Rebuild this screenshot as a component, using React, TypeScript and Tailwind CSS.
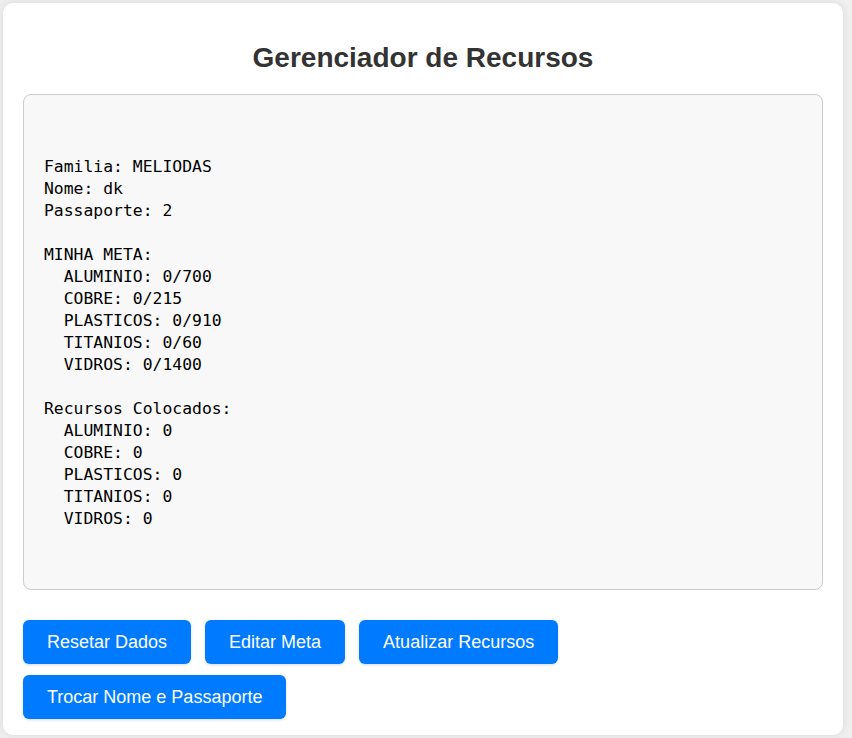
import React from "react";

const text = `

Familia: MELIODAS
Nome: dk
Passaporte: 2

MINHA META:
  ALUMINIO: 0/700
  COBRE: 0/215
  PLASTICOS: 0/910
  TITANIOS: 0/60
  VIDROS: 0/1400

Recursos Colocados:
  ALUMINIO: 0
  COBRE: 0
  PLASTICOS: 0
  TITANIOS: 0
  VIDROS: 0


`;

const buttons = ["Resetar Dados", "Editar Meta", "Atualizar Recursos", "Trocar Nome e Passaporte"];

export default function App() {
  return (
    <div className="min-h-[738px] bg-[#f0f0f0] pl-[3px] pt-[3px]" style={{ fontFamily: '"Liberation Sans", Arial, sans-serif' }}>
      <div className="w-[840px] rounded-[10px] bg-white px-5 pt-5 pb-4 shadow-[0_0_10px_rgba(0,0,0,0.1)]">
        <h2 className="mt-[19px] mb-5 text-center text-[28px] leading-[32px] font-bold text-[#333]">Gerenciador de Recursos</h2>
        <pre
          className="m-0 whitespace-pre rounded-[8px] border border-[#ccc] bg-[#f8f8f8] px-5 pt-[17px] pb-[15px] text-[16.4px] leading-[22px] text-black"
          style={{ fontFamily: '"DejaVu Sans Mono", monospace' }}
        >{text}</pre>
        <div className="mt-[30px] flex flex-wrap gap-x-[14px] gap-y-[11px]">
          {buttons.map((b) => (
            <button
              key={b}
              className="h-[44px] rounded-[6px] bg-[#007bff] px-6 text-[18px] text-white shadow-[0_1px_3px_rgba(0,0,0,0.15)]"
            >
              {b}
            </button>
          ))}
        </div>
      </div>
    </div>
  );
}
